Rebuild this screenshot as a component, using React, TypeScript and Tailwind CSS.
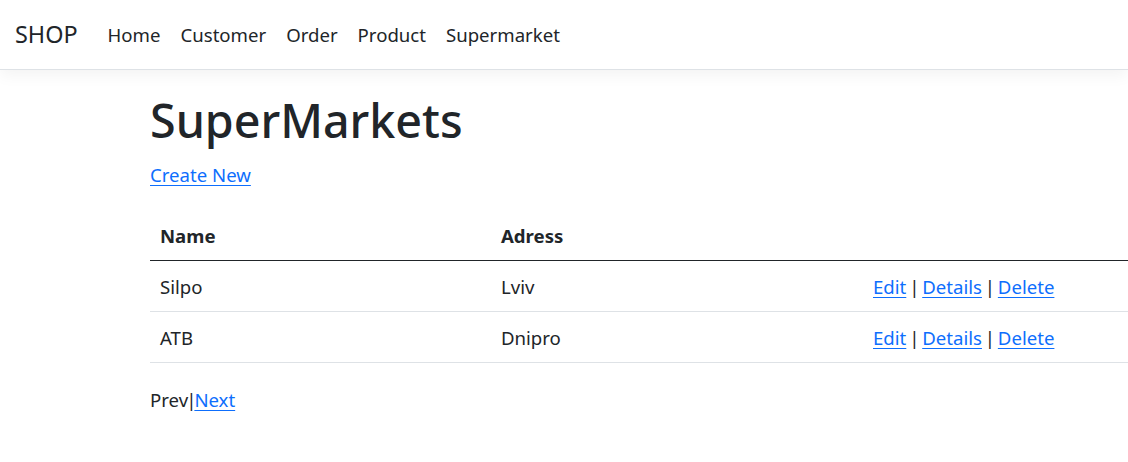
import React from "react";

const rows = [
  { name: "Silpo", adress: "Lviv" },
  { name: "ATB", adress: "Dnipro" },
];

function Link({ children }: { children: React.ReactNode }) {
  return (
    <a href="#" className="text-[#0d6efd] underline underline-offset-[3px]">
      {children}
    </a>
  );
}

export default function App() {
  return (
    <div className="w-full overflow-hidden bg-white text-[#212529] font-['Segoe_UI','Noto_Sans',sans-serif] text-[18.6px] leading-[30px] min-h-[462px]">
      <header className="mb-[20px]">
        <nav className="h-[70px] flex items-center px-[15px] bg-white border-b border-[#dee2e6] shadow-[0_5px_15px_rgba(0,0,0,0.05)]">
          <a href="#" className="text-[23.4px] leading-[37px] mr-[20px] pl-0 text-[#212529]">
            SHOP
          </a>
          <ul className="flex">
            {["Home", "Customer", "Order", "Product", "Supermarket"].map((l) => (
              <li key={l}>
                <a href="#" className="block px-[10px] py-[10px] text-[#212529]">
                  {l}
                </a>
              </li>
            ))}
          </ul>
        </nav>
      </header>
      <main className="pl-[150px]">
        <h1 className="text-[46.6px] leading-[60px] font-medium mb-[10px]">SuperMarkets</h1>
        <p className="mb-[20px]">
          <Link>Create New</Link>
        </p>
        <table className="w-[1116px] border-collapse mb-[20px] table-fixed">
          <colgroup>
            <col className="w-[341px]" />
            <col className="w-[372px]" />
            <col />
          </colgroup>
          <thead>
            <tr className="border-b border-[#212529]">
              <th className="text-left font-bold px-[10px] pt-[11px] pb-[9px]">Name</th>
              <th className="text-left font-bold px-[10px] pt-[11px] pb-[9px]">Adress</th>
              <th className="px-[10px] py-[10px]"></th>
            </tr>
          </thead>
          <tbody>
            {rows.map((r) => (
              <tr key={r.name} className="border-b border-[#dee2e6]">
                <td className="px-[10px] pt-[11px] pb-[9px]">{r.name}</td>
                <td className="px-[10px] pt-[11px] pb-[9px]">{r.adress}</td>
                <td className="px-[10px] pt-[11px] pb-[9px] [word-spacing:-2px]">
                  <Link>Edit</Link> | <Link>Details</Link> | <Link>Delete</Link>
                </td>
              </tr>
            ))}
          </tbody>
        </table>
        <div className="pt-[2px]">
          Prev<span className="mx-[-2px]">|</span>
          <Link>Next</Link>
        </div>
      </main>
    </div>
  );
}
